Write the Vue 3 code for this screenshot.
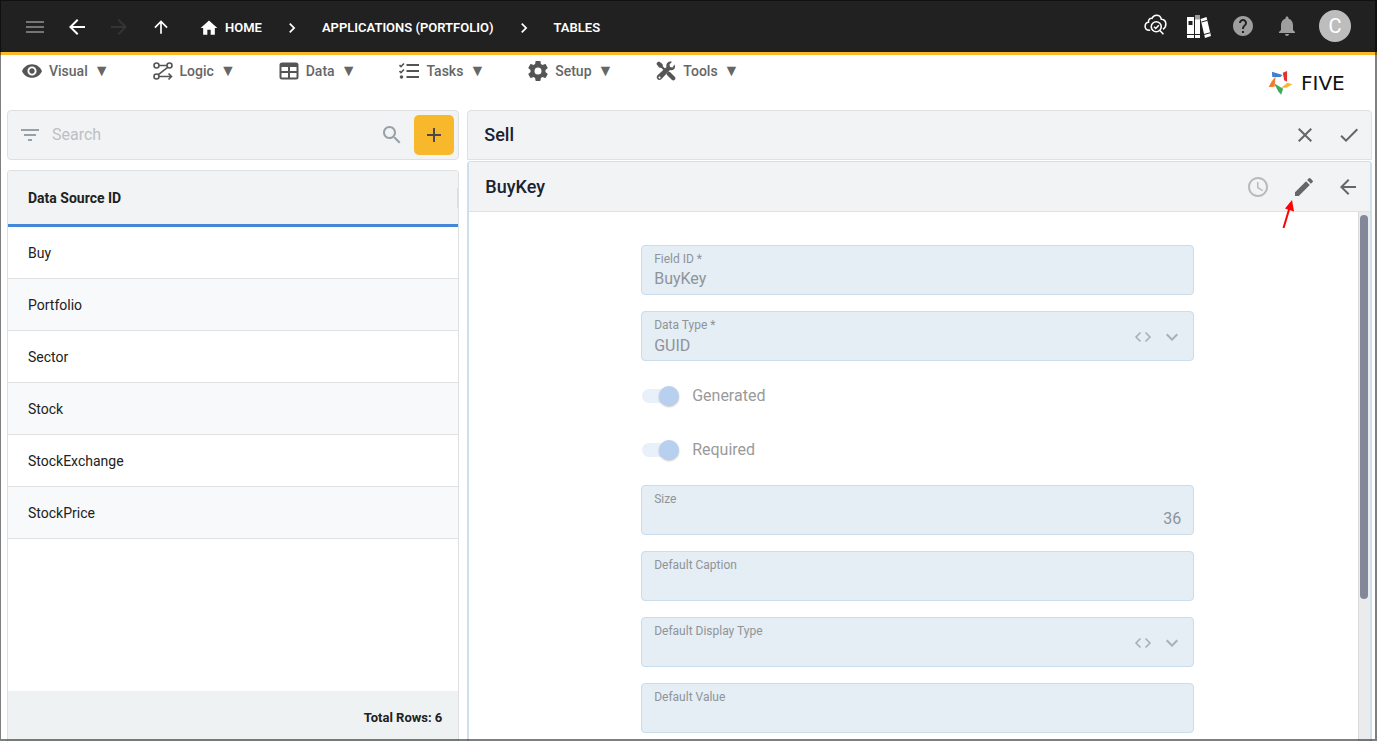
<script setup>
import { ref } from 'vue'

const icons = {
  menu: 'M3 18h18v-2H3v2zm0-5h18v-2H3v2zm0-7v2h18V6H3z',
  back: 'M20 11H7.83l5.59-5.59L12 4l-8 8 8 8 1.41-1.41L7.83 13H20v-2z',
  forward: 'M12 4l-1.41 1.41L16.17 11H4v2h12.17l-5.58 5.59L12 20l8-8z',
  up: 'M4 12l1.41 1.41L11 7.83V20h2V7.83l5.58 5.59L20 12l-8-8-8 8z',
  home: 'M10 20v-6h4v6h5v-8h3L12 3 2 12h3v8z',
  right: 'M10 6L8.59 7.41 13.17 12l-4.58 4.59L10 18l6-6z',
  help: 'M12 2C6.48 2 2 6.48 2 12s4.48 10 10 10 10-4.48 10-10S17.52 2 12 2zm1 17h-2v-2h2v2zm2.07-7.75l-.9.92C13.45 12.9 13 13.5 13 15h-2v-.5c0-1.1.45-2.1 1.17-2.83l1.24-1.26c.37-.36.59-.86.59-1.41 0-1.1-.9-2-2-2s-2 .9-2 2H8c0-2.21 1.79-4 4-4s4 1.79 4 4c0 .88-.36 1.68-.93 2.25z',
  bell: 'M12 22c1.1 0 2-.9 2-2h-4c0 1.1.89 2 2 2zm6-6v-5c0-3.07-1.64-5.64-4.5-6.32V4c0-.83-.67-1.5-1.5-1.5s-1.5.67-1.5 1.5v.68C7.63 5.36 6 7.92 6 11v5l-2 2v1h16v-1l-2-2z',
  filter: 'M10 18h4v-2h-4v2zM3 6v2h18V6H3zm3 7h12v-2H6v2z',
  search: 'M15.5 14h-.79l-.28-.27C15.41 12.59 16 11.11 16 9.5 16 5.91 13.09 3 9.5 3S3 5.91 3 9.5 5.91 16 9.5 16c1.61 0 3.09-.59 4.23-1.57l.27.28v.79l5 4.99L20.49 19l-4.99-5zm-6 0C7.01 14 5 11.99 5 9.5S7.01 5 9.5 5 14 7.01 14 9.5 11.99 14 9.5 14z',
  add: 'M19 13h-6v6h-2v-6H5v-2h6V5h2v6h6v2z',
  close: 'M19 6.41L17.59 5 12 10.59 6.41 5 5 6.41 10.59 12 5 17.59 6.41 19 12 13.41 17.59 19 19 17.59 13.41 12z',
  check: 'M9 16.17L4.83 12l-1.42 1.41L9 19 21 7l-1.41-1.41z',
  clock: 'M11.99 2C6.47 2 2 6.48 2 12s4.47 10 9.99 10C17.52 22 22 17.52 22 12S17.52 2 11.99 2zM12 20c-4.42 0-8-3.58-8-8s3.58-8 8-8 8 3.58 8 8-3.58 8-8 8zm.5-13H11v6l5.25 3.15.75-1.23-4.5-2.67z',
  edit: 'M3 17.25V21h3.75L17.81 9.94l-3.75-3.75L3 17.25zM20.71 7.04c.39-.39.39-1.02 0-1.41l-2.34-2.34a.9959.9959 0 0 0-1.41 0l-1.83 1.83 3.75 3.75 1.83-1.83z',
  down: 'M16.59 8.59L12 13.17 7.41 8.59 6 10l6 6 6-6z',
  eye: 'M12 4.5C7 4.5 2.73 7.61 1 12c1.73 4.39 6 7.5 11 7.5s9.27-3.11 11-7.5c-1.73-4.39-6-7.5-11-7.5zM12 17c-2.76 0-5-2.24-5-5s2.24-5 5-5 5 2.24 5 5-2.24 5-5 5zm0-8c-1.66 0-3 1.34-3 3s1.34 3 3 3 3-1.34 3-3-1.34-3-3-3z',
  gear: 'M12,15.5A3.5,3.5 0 0,1 8.5,12A3.5,3.5 0 0,1 12,8.5A3.5,3.5 0 0,1 15.5,12A3.5,3.5 0 0,1 12,15.5M19.43,12.97C19.47,12.65 19.5,12.33 19.5,12C19.5,11.67 19.47,11.34 19.43,11L21.54,9.37C21.73,9.22 21.78,8.95 21.66,8.73L19.66,5.27C19.54,5.05 19.27,4.96 19.05,5.05L16.56,6.05C16.04,5.66 15.5,5.32 14.87,5.07L14.5,2.42C14.46,2.18 14.25,2 14,2H10C9.75,2 9.54,2.18 9.5,2.42L9.13,5.07C8.5,5.32 7.96,5.66 7.44,6.05L4.95,5.05C4.73,4.96 4.46,5.05 4.34,5.27L2.34,8.73C2.21,8.95 2.27,9.22 2.46,9.37L4.57,11C4.53,11.34 4.5,11.67 4.5,12C4.5,12.33 4.53,12.65 4.57,12.97L2.46,14.63C2.27,14.78 2.21,15.05 2.34,15.27L4.34,18.73C4.46,18.95 4.73,19.03 4.95,18.95L7.44,17.94C7.96,18.34 8.5,18.68 9.13,18.93L9.5,21.58C9.54,21.82 9.75,22 10,22H14C14.25,22 14.46,21.82 14.5,21.58L14.87,18.93C15.5,18.67 16.04,18.34 16.56,17.94L19.05,18.95C19.27,19.03 19.54,18.95 19.66,18.73L21.66,15.27C21.78,15.05 21.73,14.78 21.54,14.63L19.43,12.97Z',
}

const menus = ['Visual', 'Logic', 'Data', 'Tasks', 'Setup', 'Tools']
const sources = ['Buy', 'Portfolio', 'Sector', 'Stock', 'StockExchange', 'StockPrice']
const query = ref('')

const fields = [
  { id: 'field-id', label: 'Field ID *', type: 'text', value: 'BuyKey' },
  { id: 'data-type', label: 'Data Type *', type: 'select', value: 'GUID' },
  { id: 'generated', label: 'Generated', type: 'switch' },
  { id: 'required', label: 'Required', type: 'switch' },
  { id: 'size', label: 'Size', type: 'text', value: '36', numeric: true },
  { id: 'caption', label: 'Default Caption', type: 'text', value: '' },
  { id: 'display-type', label: 'Default Display Type', type: 'select', value: '' },
  { id: 'default-value', label: 'Default Value', type: 'text', value: '' },
]
</script>

<template>
  <div class="app">
    <header class="topbar">
      <div class="history">
        <button class="icon-btn dim" aria-label="Menu"><svg viewBox="0 0 24 24"><path :d="icons.menu" /></svg></button>
        <button class="icon-btn" aria-label="Back"><svg viewBox="0 0 24 24"><path :d="icons.back" /></svg></button>
        <button class="icon-btn off" aria-label="Forward" disabled><svg viewBox="0 0 24 24"><path :d="icons.forward" /></svg></button>
        <button class="icon-btn" aria-label="Up"><svg class="s20" viewBox="0 0 24 24"><path :d="icons.up" /></svg></button>
      </div>
      <nav class="crumbs" aria-label="Breadcrumb">
        <a href="#home"><svg class="s20" viewBox="0 0 24 24"><path :d="icons.home" /></svg>HOME</a>
        <svg class="s20" viewBox="0 0 24 24"><path :d="icons.right" /></svg>
        <a href="#applications">APPLICATIONS (PORTFOLIO)</a>
        <svg class="s20" viewBox="0 0 24 24"><path :d="icons.right" /></svg>
        <a href="#tables">TABLES</a>
      </nav>
      <div class="tools">
        <button class="icon-btn" aria-label="Inspect cloud">
          <svg viewBox="-1 1 25 25" class="line">
            <path d="M6.500 18H5.600C3 18 1.200 16.200 1.200 13.800 1.200 11.600 2.800 10 4.700 9.700 4.300 7 6.200 5.300 8.300 5.500 9.300 3.300 11 2.200 13 2.200c2.800 0 4.700 1.800 5.100 4.300 2.600.2 4.700 2 4.700 5 0 2.600-1.300 4.500-3 5.400" />
            <circle cx="12.800" cy="14.300" r="5.200" />
            <path d="M16.600 18.100l3.700 4M10.500 14.300l1.800 1.800 3.200-3.400" />
          </svg>
        </button>
        <button class="icon-btn" aria-label="Library">
          <svg viewBox="0 0 24 24">
            <path d="M0 3h7v21H0z" /><path d="M8 1h5v23H8z" /><path d="M13.500 5l6-2 4.500 19-6 2z" />
            <g class="cut"><path d="M0 20.500h13M14.500 8l6-1.700M17 20.500l6-1.700M7.500 3v21" /></g>
            <path class="hole" d="M1.500 7h4v4h-4z" />
            <path class="shade" d="M8 1h5v4.500H8z" />
          </svg>
        </button>
        <button class="icon-btn soft" aria-label="Help"><svg viewBox="0 0 24 24"><path :d="icons.help" /></svg></button>
        <button class="icon-btn soft" aria-label="Notifications"><svg viewBox="0 0 24 24"><path :d="icons.bell" /></svg></button>
        <button class="avatar" aria-label="Account">C</button>
      </div>
    </header>

    <div class="menubar">
      <nav class="menus" aria-label="Main">
        <button v-for="m in menus" :key="m" class="menu">
          <svg v-if="m === 'Visual'" viewBox="1 1 22 22"><path :d="icons.eye" /></svg>
          <svg v-else-if="m === 'Logic'" viewBox="0 0 20 20" class="line">
            <circle cx="3.500" cy="4.500" r="2.500" /><circle cx="16.500" cy="4.500" r="2.500" /><circle cx="3.500" cy="15.500" r="2.500" />
            <path d="M6 4.500h8M14.700 6.300L5.300 13.700M6 15.500h12.500M15.500 12.500l3 3-3 3" />
          </svg>
          <svg v-else-if="m === 'Data'" viewBox="0 0 20 20"><path fill-rule="evenodd" d="M3 1.500h14a2.500 2.500 0 0 1 2.500 2.500v12a2.500 2.500 0 0 1-2.500 2.500H3A2.500 2.500 0 0 1 .5 16V4A2.500 2.500 0 0 1 3 1.500zM2.500 6v4H9V6zM11 6v4h6.500V6zM2.500 12v4.500H9V12zM11 12v4.500h6.500V12z" /></svg>
          <svg v-else-if="m === 'Tasks'" viewBox="0 0 20 20" class="line">
            <path class="thick" d="M7.500 4H20M7.500 10H20M7.500 16H20" /><path d="M.5 4l1.500 1.500L5 2.500M.5 10L2 11.500 5 8.500" /><circle class="dot" cx="2.500" cy="16" r="1" />
          </svg>
          <svg v-else-if="m === 'Setup'" viewBox="2 2 20 20"><path :d="icons.gear" /></svg>
          <svg v-else viewBox="0 0 20 20">
            <path d="M1 1.500L3 .500 6.500 3l.5 2.500 3.500 3.500-1.600 1.600L5.400 7 3 6.500.500 3z" />
            <path d="M10.500 12.500l2-2 1.500.5 5 5c1.500 2-1 4.500-3 3l-5-5z" />
            <path d="M18.500 3.500c1.800 4-1.500 6.500-4.500 5.500L5.500 18c-2.500 2.800-6.500-1-4-3.700L10.500 6C9.500 2.500 12.500-.500 16 .800L13.500 3.500l.5 2.500 2.500.5zM3.500 15.500a1 1 0 1 0 .1 0z" />
          </svg>
          <span>{{ m }}</span><span class="caret" aria-hidden="true">▼</span>
        </button>
      </nav>
      <a class="logo" href="#five" aria-label="Five">
        <svg viewBox="0 0 76 76">
          <path fill="#3f7fd6" d="M12 5l32 10-6 6H13z" />
          <path fill="#e5322d" d="M45 8l13-5v33l-9-5z" />
          <path fill="#f7b92b" d="M40 54l19-15 15 4-17 11z" />
          <path fill="#3faa58" d="M18 40l28 17-6 18-8-9z" />
          <path fill="#f47b2a" d="M23 20l-3 31L2 52l9-17z" />
        </svg>
        <span>FIVE</span>
      </a>
    </div>

    <main class="main">
      <section class="left">
        <div class="searchbar">
          <button class="icon-btn steel" aria-label="Filter"><svg viewBox="0 0 24 24"><path :d="icons.filter" /></svg></button>
          <input v-model="query" type="text" placeholder="Search" aria-label="Search" />
          <button class="icon-btn steel" aria-label="Run search"><svg viewBox="0 0 24 24"><path :d="icons.search" /></svg></button>
          <button class="add" aria-label="Add"><svg viewBox="0 0 24 24"><path :d="icons.add" /></svg></button>
        </div>
        <div class="listing">
          <table>
            <thead><tr><th scope="col"><div class="col-head">Data Source ID<i></i></div></th></tr></thead>
            <tbody><tr v-for="s in sources" :key="s"><td>{{ s }}</td></tr></tbody>
          </table>
          <div class="total">Total Rows: 6</div>
        </div>
      </section>

      <section class="right">
        <div class="bar">
          <h1>Sell</h1>
          <button class="icon-btn dark" aria-label="Cancel"><svg viewBox="0 0 24 24"><path :d="icons.close" /></svg></button>
          <button class="icon-btn dark" aria-label="Save"><svg viewBox="0 0 24 24"><path :d="icons.check" /></svg></button>
        </div>
        <div class="detail">
          <div class="bar inner">
            <h2>BuyKey</h2>
            <button class="icon-btn pale" aria-label="History"><svg viewBox="0 0 24 24"><path :d="icons.clock" /></svg></button>
            <button class="icon-btn dark edit" aria-label="Edit">
              <svg viewBox="0 0 24 24"><path :d="icons.edit" /></svg>
              <svg class="pointer" viewBox="0 0 12 28"><path d="M1.500 28L7.500 8" stroke="#f00" stroke-width="2" /><path d="M10 0l2 11.500L3 8.500z" fill="#f00" /></svg>
            </button>
            <button class="icon-btn dark" aria-label="Close detail"><svg viewBox="0 0 24 24"><path :d="icons.back" /></svg></button>
          </div>
          <div class="body">
            <form class="form" @submit.prevent>
              <div class="fields">
                <template v-for="f in fields" :key="f.id">
                  <div v-if="f.type === 'switch'" class="switch">
                    <input :id="f.id" type="checkbox" checked disabled /><label :for="f.id">{{ f.label }}</label>
                  </div>
                  <div v-else class="field">
                    <div class="entry">
                      <label :for="f.id">{{ f.label }}</label>
                      <select v-if="f.type === 'select'" :id="f.id" disabled><option>{{ f.value }}</option></select>
                      <input v-else :id="f.id" type="text" :value="f.value" :class="{ numeric: f.numeric }" disabled />
                    </div>
                    <div v-if="f.type === 'select'" class="marks">
                      <svg viewBox="0 0 20 20" class="line"><path d="M7.500 5.500L3 10l4.500 4.500M12.500 5.500L17 10l-4.500 4.500" /></svg>
                      <svg class="drop" viewBox="0 0 24 24"><path :d="icons.down" /></svg>
                    </div>
                  </div>
                </template>
              </div>
            </form>
            <div class="track"><div class="thumb"></div></div>
          </div>
        </div>
      </section>
    </main>
  </div>
</template>

<style>
body { margin: 0; }
</style>

<style scoped>
.app, .app * { box-sizing: border-box; }
.app {
  height: 100vh;
  display: flex;
  flex-direction: column;
  overflow: hidden;
  background: #fff;
  color: #212121;
  font: 14px/20px Roboto, "Liberation Sans", sans-serif;
}
.app::after {
  content: "";
  position: fixed;
  inset: 0;
  border: solid rgba(0, 0, 0, .5);
  border-width: 1px 2px 2px 1px;
  pointer-events: none;
}
button, input, select { font: inherit; color: inherit; }
button { border: 0; padding: 0; background: none; cursor: pointer; }
a { color: inherit; text-decoration: none; }
svg { width: 24px; height: 24px; fill: currentColor; display: block; flex: none; }
.s20 { width: 20px; height: 20px; }
.line { fill: none; stroke: currentColor; stroke-width: 1.600; }
.line .thick { stroke-width: 2; }
.line .dot { fill: currentColor; }
.icon-btn { display: grid; place-items: center; width: 24px; height: 24px; flex: none; }

.topbar {
  display: flex;
  align-items: center;
  height: 55px;
  flex: none;
  padding: 0 26px 0 23px;
  border-bottom: 3px solid #fbb829;
  background: #212121;
  color: #fff;
}
.history { display: flex; gap: 18px; padding-top: 2px; }
.dim { color: #757575; }
.off { color: #343434; }
.soft { color: #9e9e9e; }
.crumbs {
  display: flex;
  align-items: center;
  gap: 20px;
  margin-left: 26px;
  padding-top: 3px;
  font-size: 13px;
  font-weight: 600;
}
.crumbs a { display: flex; align-items: center; gap: 6px; }
.tools { display: flex; align-items: center; gap: 20px; margin-left: auto; }
.cut { stroke: #212121; stroke-width: 1; fill: none; }
.hole { fill: #212121; }
.shade { fill: #9e9e9e; }
.avatar {
  width: 32px;
  height: 32px;
  border-radius: 50%;
  background: #bdbdbd;
  color: #fff;
  font-size: 20px;
}

.menubar { display: flex; justify-content: space-between; height: 55px; flex: none; padding: 0 22px; }
.menus { display: flex; gap: 43px; height: 32px; }
.menu { display: flex; align-items: center; gap: 7px; color: #666; font-size: 14px; font-weight: 500; }
.menu svg { width: 20px; height: 20px; color: #555; }
.caret { margin-left: -1px; font-size: 16px; }
.logo { display: flex; align-items: center; gap: 8px; height: 55px; color: #111; font: 20px/24px "DejaVu Sans", sans-serif; }
.logo svg { width: 25px; height: 25px; }
.logo span { width: 54px; }

.main {
  flex: 1;
  min-height: 0;
  display: grid;
  grid-template-columns: minmax(0, 1fr) minmax(0, 2fr);
  gap: 8px;
  padding: 0 5px 0 7px;
}
.left, .right { display: flex; flex-direction: column; min-height: 0; }
.searchbar {
  display: flex;
  align-items: center;
  height: 50px;
  flex: none;
  padding: 0 4px 0 10px;
  border: 1px solid #dfe0e1;
  border-radius: 4px;
  background: #f1f3f5;
}
.searchbar input { flex: 1; min-width: 0; margin: 0 10px; padding: 0; border: 0; outline: 0; background: none; font-size: 16px; }
.searchbar input::placeholder { color: #bdc0c3; opacity: 1; }
.steel { color: #98a1a8; }
.add {
  display: grid;
  place-items: center;
  width: 40px;
  height: 40px;
  margin-left: 10px;
  border-radius: 5px;
  background: #f7b82b;
  color: #4a4a4a;
}
.listing {
  flex: 1;
  min-height: 0;
  display: flex;
  flex-direction: column;
  margin-top: 10px;
  border: 1px solid #dfe0e1;
  border-bottom: 0;
  border-radius: 4px 4px 0 0;
  overflow: hidden;
}
table { width: 100%; border-collapse: separate; border-spacing: 0; }
th, td { padding: 0 0 0 20px; text-align: left; }
th { height: 56px; border-bottom: 3px solid #4486d8; background: #f1f3f5; font-weight: 700; }
.col-head { display: flex; justify-content: space-between; }
.col-head i { width: 1px; background: #dcdee0; }
td { height: 52px; border-bottom: 1px solid #dfe1e3; }
tbody tr:nth-child(even) { background: #f8f9fa; }
.total {
  height: 50px;
  margin-top: auto;
  padding: 17px 16px 0;
  background: #eef2f3;
  font-size: 13px;
  font-weight: 700;
  text-align: right;
}

.bar {
  display: flex;
  align-items: center;
  gap: 20px;
  height: 50px;
  flex: none;
  padding: 0 10px 0 16px;
  border: 1px solid #dfe0e1;
  border-radius: 4px 4px 0 0;
  background: #f1f3f5;
}
h1, h2 { margin: 0 auto 0 0; font-size: 18px; line-height: 24px; font-weight: 500; color: #1b2230; }
.dark { color: #666; }
.pale { color: #b7b9bb; margin-right: 2px; }
.detail {
  flex: 1;
  min-height: 0;
  display: flex;
  flex-direction: column;
  margin-top: 1px;
  border: solid #d0dfed;
  border-width: 1px 2px 0;
  border-radius: 4px 4px 0 0;
}
.inner { border-width: 0 0 1px; }
.edit { position: relative; }
.pointer { position: absolute; width: 12px; height: 28px; left: -10px; top: 25px; }
.body { flex: 1; min-height: 0; display: flex; }
.form { flex: 1; min-width: 0; overflow: hidden; padding: 33px 16px 16px 24px; }
.fields { display: flex; flex-direction: column; gap: 16px; max-width: 553px; margin: 0 auto; }
.field {
  display: flex;
  align-items: center;
  height: 50px;
  padding: 2px 12px 0;
  border: 1px solid #cbdceb;
  border-radius: 4px;
  background: #e5edf5;
  color: #8f9499;
}
.entry { flex: 1; min-width: 0; display: flex; flex-direction: column; }
.entry label { font-size: 12px; line-height: 16px; }
.entry input, .entry select {
  appearance: none;
  width: 100%;
  height: 24px;
  margin: 0;
  padding: 0;
  border: 0;
  background: none;
  color: #8f9499;
  font-size: 16px;
  line-height: 24px;
  opacity: 1;
}
.entry select { padding-top: 1px; }
.entry .numeric { text-align: right; }
.marks { display: flex; align-items: center; gap: 7px; margin-right: -3px; color: #a7afb7; }
.marks svg { width: 20px; height: 20px; }
.marks .drop { width: 24px; height: 24px; }
.switch { display: flex; align-items: center; gap: 13px; height: 38px; padding-left: 1px; color: #9a9a9a; font-size: 16px; }
.switch input { appearance: none; display: flex; align-items: center; width: 37px; height: 20px; margin: 0; }
.switch input::before { content: ""; width: 34px; height: 14px; border-radius: 7px; background: #e8f0fa; }
.switch input::after {
  content: "";
  width: 20px;
  height: 20px;
  margin-left: -17px;
  border-radius: 50%;
  background: #b8d0f0;
  box-shadow: 0 1px 2px rgba(0, 0, 0, .25);
}
.track { width: 12px; padding: 3px 2px 0 1px; border-left: 1px solid #d9d9d9; background: #ebebeb; }
.thumb { width: 8px; height: 73%; border-radius: 4px; background: #828899; }
</style>
